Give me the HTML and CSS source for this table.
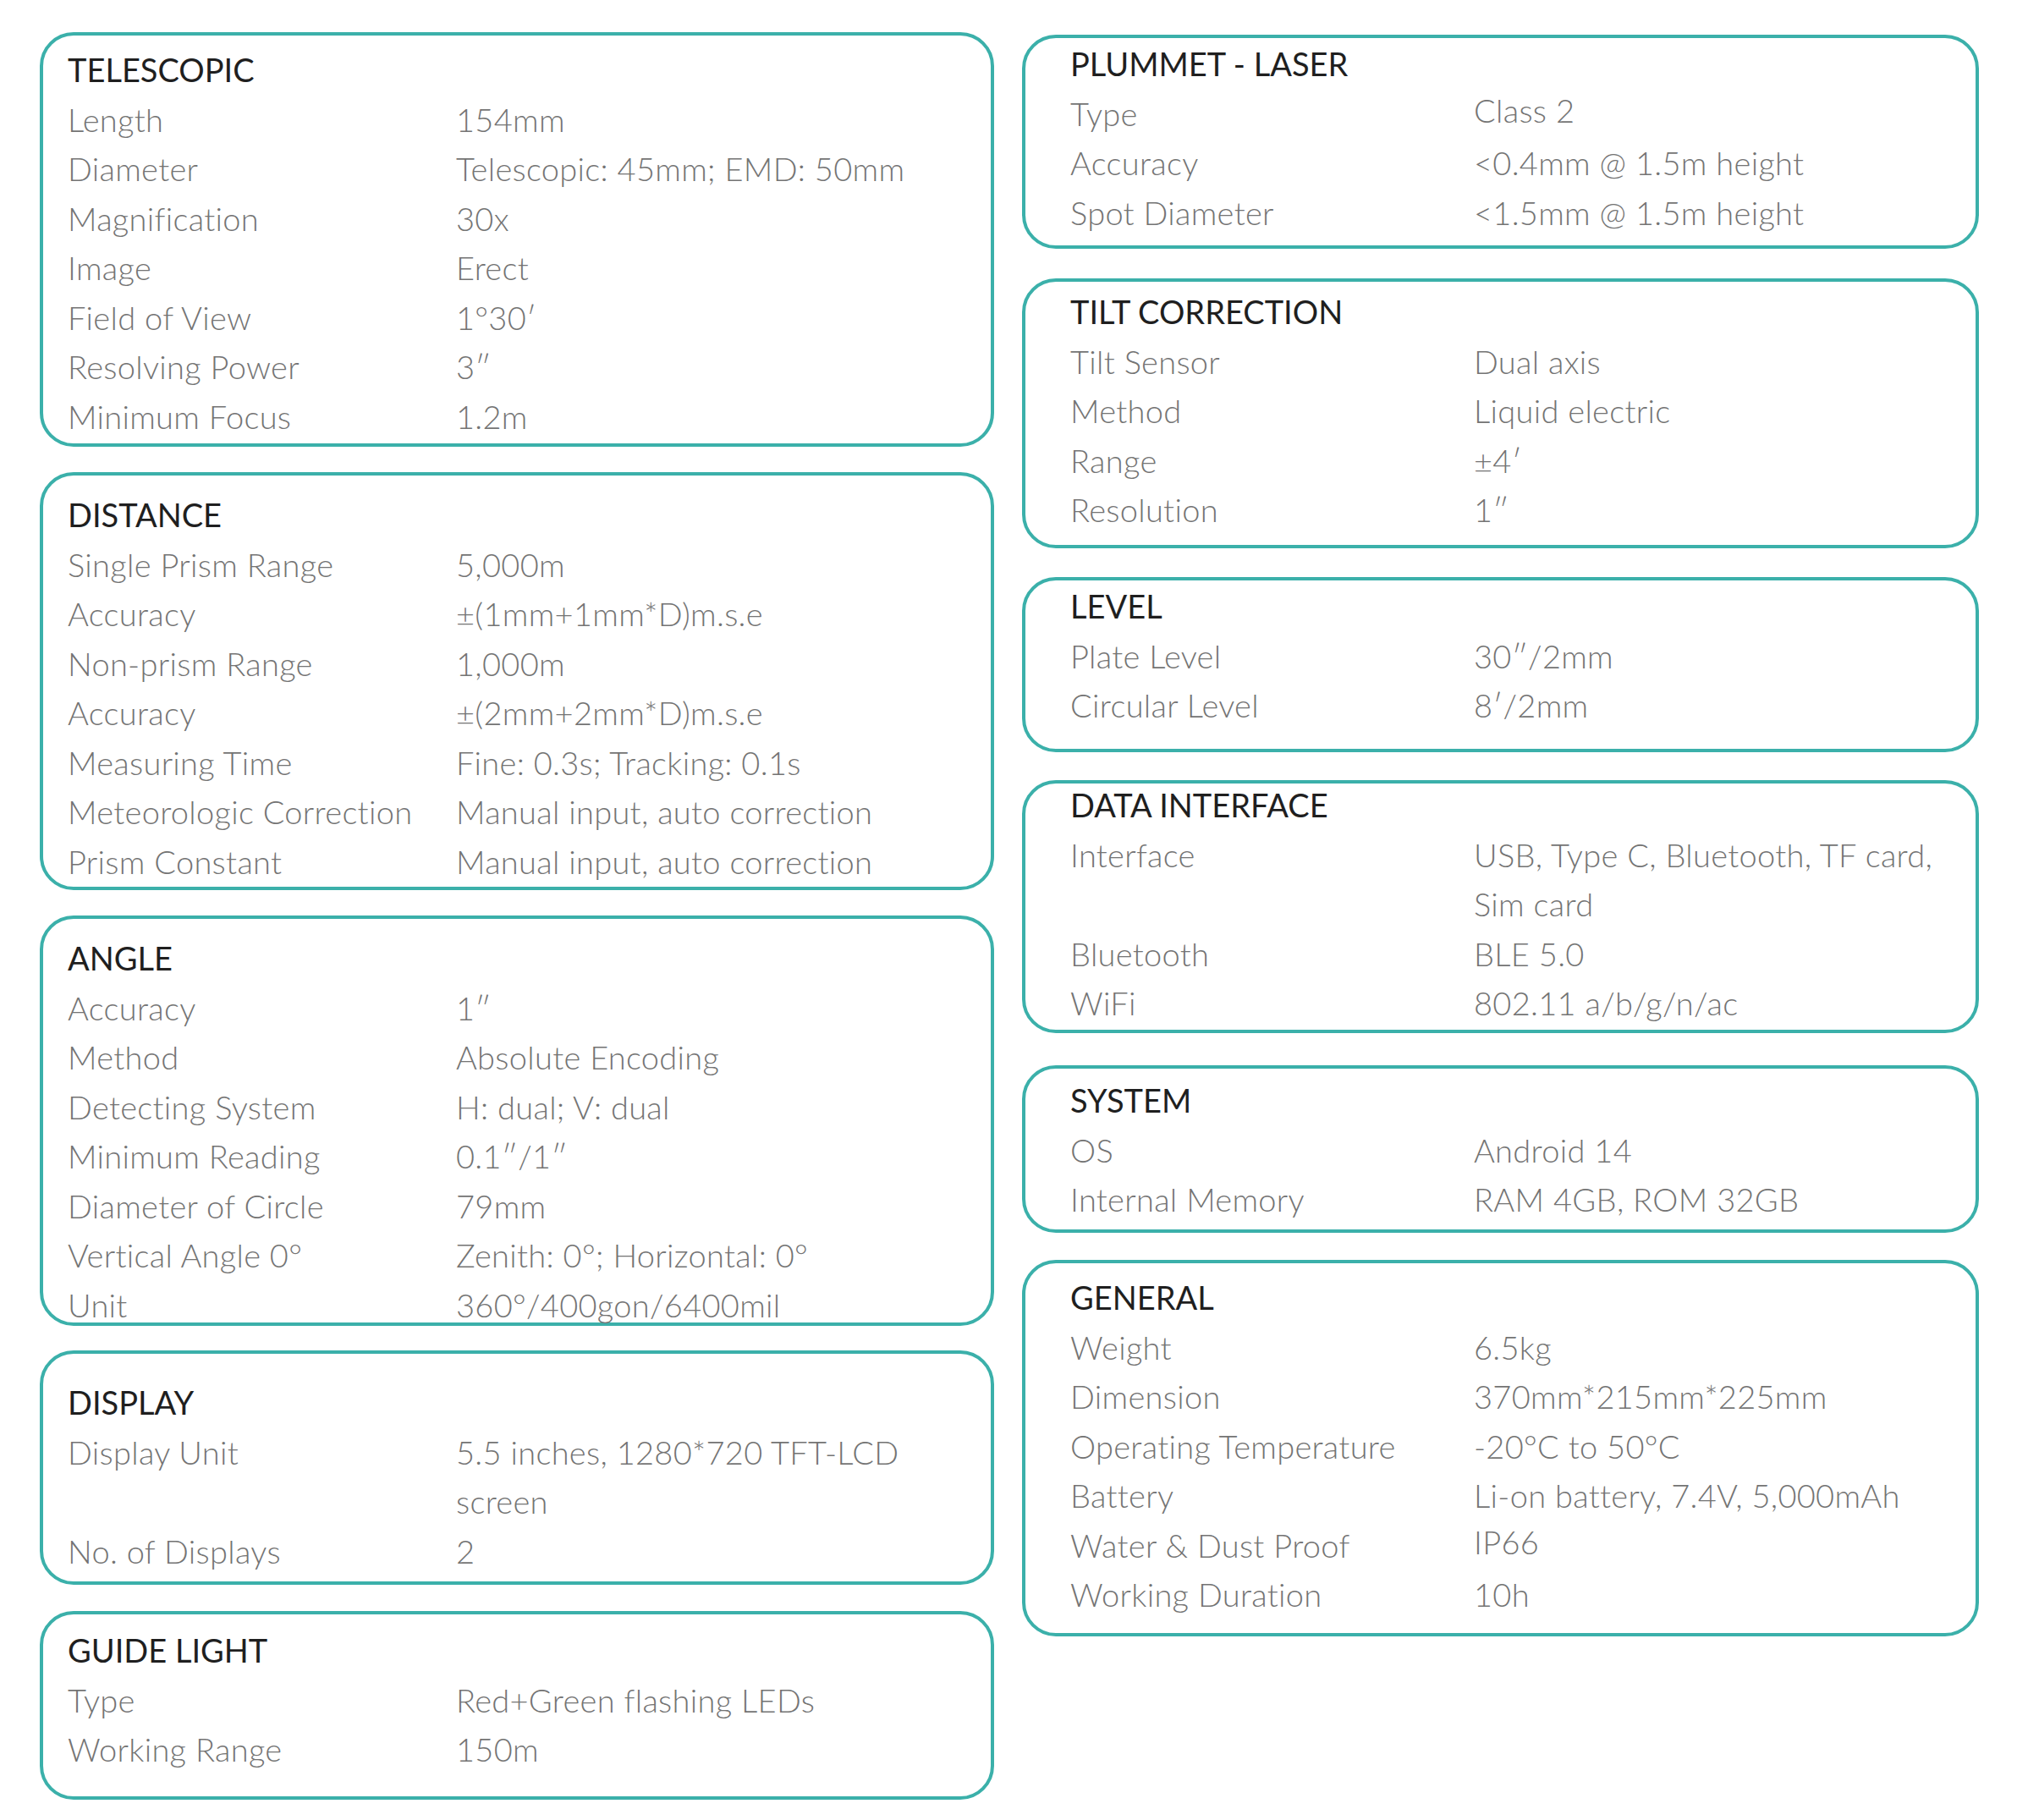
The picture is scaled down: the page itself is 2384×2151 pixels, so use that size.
FILE: index.html
```html
<!DOCTYPE html>
<html lang="en">
<head>
<meta charset="utf-8">
<title>Specifications</title>
<link rel="stylesheet" href="styles.css">
</head>
<body>
<div class="page">
  <div class="col col-left">
    <section class="card c-tele">
      <h2 class="title">TELESCOPIC</h2>
      <dl class="rows">
        <dt>Length</dt><dd>154mm</dd>
        <dt>Diameter</dt><dd>Telescopic: 45mm; EMD: 50mm</dd>
        <dt>Magnification</dt><dd>30x</dd>
        <dt>Image</dt><dd>Erect</dd>
        <dt>Field of View</dt><dd>1°30′</dd>
        <dt>Resolving Power</dt><dd>3″</dd>
        <dt>Minimum Focus</dt><dd>1.2m</dd>
      </dl>
    </section>
    <section class="card c-dist">
      <h2 class="title">DISTANCE</h2>
      <dl class="rows">
        <dt>Single Prism Range</dt><dd>5,000m</dd>
        <dt>Accuracy</dt><dd>±(1mm+1mm*D)m.s.e</dd>
        <dt>Non-prism Range</dt><dd>1,000m</dd>
        <dt>Accuracy</dt><dd>±(2mm+2mm*D)m.s.e</dd>
        <dt>Measuring Time</dt><dd>Fine: 0.3s; Tracking: 0.1s</dd>
        <dt>Meteorologic Correction</dt><dd>Manual input, auto correction</dd>
        <dt>Prism Constant</dt><dd>Manual input, auto correction</dd>
      </dl>
    </section>
    <section class="card c-angle">
      <h2 class="title">ANGLE</h2>
      <dl class="rows">
        <dt>Accuracy</dt><dd>1″</dd>
        <dt>Method</dt><dd>Absolute Encoding</dd>
        <dt>Detecting System</dt><dd>H: dual; V: dual</dd>
        <dt>Minimum Reading</dt><dd>0.1″/1″</dd>
        <dt>Diameter of Circle</dt><dd>79mm</dd>
        <dt>Vertical Angle 0°</dt><dd>Zenith: 0°; Horizontal: 0°</dd>
        <dt>Unit</dt><dd>360°/400gon/6400mil</dd>
      </dl>
    </section>
    <section class="card c-display">
      <h2 class="title">DISPLAY</h2>
      <dl class="rows">
        <dt>Display Unit</dt><dd>5.5 inches, 1280*720 TFT-LCD<br>screen</dd>
        <dt>No. of Displays</dt><dd>2</dd>
      </dl>
    </section>
    <section class="card c-guide">
      <h2 class="title">GUIDE LIGHT</h2>
      <dl class="rows">
        <dt>Type</dt><dd>Red+Green flashing LEDs</dd>
        <dt>Working Range</dt><dd>150m</dd>
      </dl>
    </section>
  </div>
  <div class="col col-right">
    <section class="card c-plummet">
      <h2 class="title">PLUMMET - LASER</h2>
      <dl class="rows">
        <dt>Type</dt><dd class="up">Class 2</dd>
        <dt>Accuracy</dt><dd>&lt;0.4mm @ 1.5m height</dd>
        <dt>Spot Diameter</dt><dd>&lt;1.5mm @ 1.5m height</dd>
      </dl>
    </section>
    <section class="card c-tilt">
      <h2 class="title">TILT CORRECTION</h2>
      <dl class="rows">
        <dt>Tilt Sensor</dt><dd>Dual axis</dd>
        <dt>Method</dt><dd>Liquid electric</dd>
        <dt>Range</dt><dd>±4′</dd>
        <dt>Resolution</dt><dd>1″</dd>
      </dl>
    </section>
    <section class="card c-level">
      <h2 class="title">LEVEL</h2>
      <dl class="rows">
        <dt>Plate Level</dt><dd>30″/2mm</dd>
        <dt>Circular Level</dt><dd>8′/2mm</dd>
      </dl>
    </section>
    <section class="card c-data">
      <h2 class="title">DATA INTERFACE</h2>
      <dl class="rows">
        <dt>Interface</dt><dd>USB, Type C, Bluetooth, TF card,<br>Sim card</dd>
        <dt>Bluetooth</dt><dd>BLE 5.0</dd>
        <dt>WiFi</dt><dd>802.11 a/b/g/n/ac</dd>
      </dl>
    </section>
    <section class="card c-system">
      <h2 class="title">SYSTEM</h2>
      <dl class="rows">
        <dt>OS</dt><dd>Android 14</dd>
        <dt>Internal Memory</dt><dd>RAM 4GB, ROM 32GB</dd>
      </dl>
    </section>
    <section class="card c-general">
      <h2 class="title">GENERAL</h2>
      <dl class="rows">
        <dt>Weight</dt><dd>6.5kg</dd>
        <dt>Dimension</dt><dd>370mm*215mm*225mm</dd>
        <dt>Operating Temperature</dt><dd>-20°C to 50°C</dd>
        <dt>Battery</dt><dd>Li-on battery, 7.4V, 5,000mAh</dd>
        <dt>Water &amp; Dust Proof</dt><dd class="up">IP66</dd>
        <dt>Working Duration</dt><dd>10h</dd>
      </dl>
    </section>
  </div>
</div>
</body>
</html>
```

FILE: styles.css
```css
* { box-sizing: border-box; }

html, body {
  margin: 0;
  padding: 0;
  background: #ffffff;
}

body {
  font-family: "Lato", "Open Sans", "Liberation Sans", sans-serif;
  font-size: 38px;
  font-weight: 300;
  line-height: 58.5px;
  letter-spacing: 0.3px;
  color: #747474;
}

.page {
  display: flex;
  align-items: flex-start;
  padding-left: 47px;
  gap: 33px;
}

.col {
  display: flex;
  flex-direction: column;
}

.col-left { width: 1128px; }
.col-right { width: 1131px; }

.card {
  border: 4px solid #3bb0aa;
  border-radius: 40px;
}

.col-left .card { padding-left: 29px; }
.col-right .card { padding-left: 53px; }

.title {
  margin: 0;
  font-size: 38px;
  font-weight: 400;
  line-height: 58.5px;
  letter-spacing: 0;
  color: #1f1f1f;
}

.rows {
  margin: 0;
  display: grid;
  grid-template-columns: 459px 1fr;
}

.col-right .rows { grid-template-columns: 477px 1fr; }

.rows dt, .rows dd {
  margin: 0;
  white-space: nowrap;
}

.rows dd.up {
  position: relative;
  top: -4px;
}

/* left column cards */
.c-tele    { margin-top: 38px; padding-top: 11px; height: 490px; }
.c-dist    { margin-top: 30px; padding-top: 17px; height: 494px; }
.c-angle   { margin-top: 30px; padding-top: 17px; height: 485px; }
.c-display { margin-top: 29px; padding-top: 28px; height: 277px; }
.c-guide   { margin-top: 31px; padding-top: 13px; height: 223px; }

/* right column cards */
.c-plummet { margin-top: 41px; padding-top: 1px;  height: 253px; }
.c-tilt    { margin-top: 35px; padding-top: 6px;  height: 319px; }
.c-level   { margin-top: 34px; padding-top: 1px;  height: 207px; }
.c-data    { margin-top: 33px; padding-top: 0;    height: 299px; }
.c-data .title { margin-top: -4px; }
.c-system  { margin-top: 38px; padding-top: 8px;  height: 198px; }
.c-general { margin-top: 32px; padding-top: 11px; height: 445px; }
```
